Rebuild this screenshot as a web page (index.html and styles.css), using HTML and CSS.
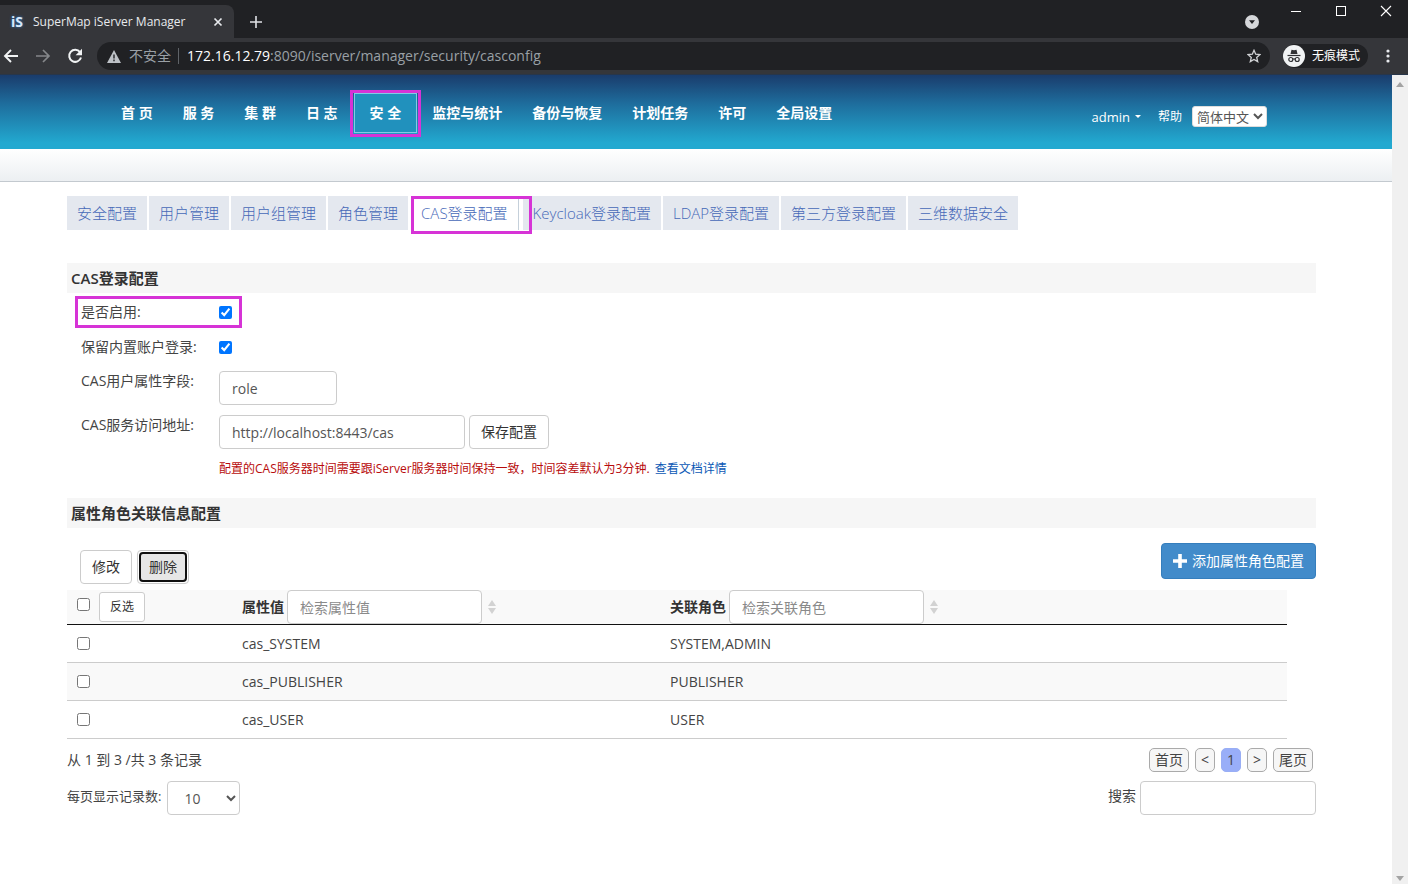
FILE: index.html
```html
<!DOCTYPE html>
<html lang="zh-CN">
<head>
<meta charset="utf-8">
<title>SuperMap iServer Manager</title>
<link rel="stylesheet" href="styles.css">
</head>
<body>
<div class="browser">
  <div class="tabstrip">
    <div class="browser-tab">
      <span class="favicon">iS</span>
      <span class="tab-title">SuperMap iServer Manager</span>
      <button class="icon-btn" aria-label="关闭标签页"><svg width="10" height="10" viewBox="0 0 10 10"><path d="M1.5 1.5l7 7M8.5 1.5l-7 7" stroke="#e8eaed" stroke-width="1.7" fill="none"/></svg></button>
    </div>
    <button class="icon-btn new-tab" aria-label="新标签页"><svg width="12" height="12" viewBox="0 0 12 12"><path d="M6 0v12M0 6h12" stroke="#dfe1e5" stroke-width="1.6"/></svg></button>
    <div class="window-controls">
      <button class="icon-btn tab-search" aria-label="搜索标签页"><svg width="14" height="14" viewBox="0 0 14 14"><circle cx="7" cy="7" r="7" fill="#d5d7da"/><path d="M4 5.3h6L7 9z" fill="#202124"/></svg></button>
      <button class="icon-btn" aria-label="最小化"><svg width="12" height="12" viewBox="0 0 12 12"><path d="M1 6.5h10" stroke="#fff"/></svg></button>
      <button class="icon-btn" aria-label="最大化"><svg width="12" height="12" viewBox="0 0 12 12"><rect x="1.5" y="1.5" width="9" height="9" fill="none" stroke="#fff"/></svg></button>
      <button class="icon-btn" aria-label="关闭"><svg width="12" height="12" viewBox="0 0 12 12"><path d="M1 1l10 10M11 1L1 11" stroke="#fff" stroke-width="1.1"/></svg></button>
    </div>
  </div>
  <div class="toolbar">
    <button class="icon-btn" aria-label="后退"><svg width="16" height="16" viewBox="0 0 16 16"><path d="M15 8H2M8 2L2 8l6 6" stroke="#f1f3f4" stroke-width="1.9" fill="none"/></svg></button>
    <button class="icon-btn" aria-label="前进"><svg width="16" height="16" viewBox="0 0 16 16"><path d="M1 8h13M8 2l6 6-6 6" stroke="#85878a" stroke-width="1.7" fill="none"/></svg></button>
    <button class="icon-btn" aria-label="重新加载"><svg width="16" height="16" viewBox="0 0 16 16"><path d="M13 4.2A6 6 0 1 0 14 9.5" stroke="#f1f3f4" stroke-width="2" fill="none"/><path d="M15 .8v6.4H8.6z" fill="#f1f3f4"/></svg></button>
    <div class="address">
      <svg width="14" height="13" viewBox="0 0 14 13"><path d="M7 0l7 13H0z" fill="#bdc1c6"/><path d="M7 4.5v4M7 9.6v1.6" stroke="#202124" stroke-width="1.4"/></svg>
      <span class="insecure">不安全</span>
      <span class="url"><b>172.16.12.79</b>:8090/iserver/manager/security/casconfig</span>
      <button class="icon-btn" aria-label="收藏"><svg width="14" height="14" viewBox="0 0 14 14"><path d="M7 1.3l1.7 3.9 4.2.4-3.2 2.8 1 4.2L7 10.4l-3.7 2.2 1-4.2L1.1 5.6l4.2-.4z" stroke="#d0d2d5" stroke-width="1.3" fill="none"/></svg></button>
    </div>
    <div class="incognito">
      <svg width="22" height="22" viewBox="0 0 22 22"><circle cx="11" cy="11" r="11" fill="#f1f3f4"/><path d="M7.5 9l1-4.2 2.500.5 2.500-.5 1 4.200z" fill="#303134"/><path d="M4.500 10.500h13" stroke="#303134" stroke-width="1.200"/><g fill="none" stroke="#303134" stroke-width="1.200"><circle cx="7.800" cy="14.500" r="2"/><circle cx="14.200" cy="14.500" r="2"/><path d="M9.800 14.200q1.200-.7 2.400 0"/></g></svg>
      <span>无痕模式</span>
    </div>
    <button class="icon-btn menu" aria-label="菜单"><svg width="4" height="14" viewBox="0 0 4 14" fill="#e8eaed"><circle cx="2" cy="2" r="1.600"/><circle cx="2" cy="7" r="1.600"/><circle cx="2" cy="12" r="1.600"/></svg></button>
  </div>
</div>

<div class="viewport">
  <div class="page">
    <header class="site-header">
      <nav class="main-nav">
        <a href="#">首 页</a>
        <a href="#">服 务</a>
        <a href="#">集 群</a>
        <a href="#">日 志</a>
        <a href="#" class="current">安 全</a>
        <a href="#">监控与统计</a>
        <a href="#">备份与恢复</a>
        <a href="#">计划任务</a>
        <a href="#">许可</a>
        <a href="#">全局设置</a>
      </nav>
      <div class="account">
        <a href="#" class="user">admin <span class="caret"></span></a>
        <a href="#" class="help">帮助</a>
        <select class="lang" aria-label="语言"><option>简体中文</option></select>
      </div>
    </header>
    <div class="subbar"></div>
    <main class="content">
      <nav class="sub-tabs">
        <a href="#">安全配置</a>
        <a href="#">用户管理</a>
        <a href="#">用户组管理</a>
        <a href="#">角色管理</a>
        <a href="#" class="current">CAS登录配置</a>
        <a href="#">Keycloak登录配置</a>
        <a href="#">LDAP登录配置</a>
        <a href="#">第三方登录配置</a>
        <a href="#">三维数据安全</a>
      </nav>

      <h2 class="section-title">CAS登录配置</h2>
      <form class="cas-form">
        <div class="form-row check-row marked">
          <label for="enable">是否启用:</label>
          <input type="checkbox" id="enable" checked>
        </div>
        <div class="form-row check-row">
          <label for="keep">保留内置账户登录:</label>
          <input type="checkbox" id="keep" checked>
        </div>
        <div class="form-row text-row">
          <label for="field">CAS用户属性字段:</label>
          <input type="text" class="field field-small" id="field" value="role">
        </div>
        <div class="form-row">
          <label for="address">CAS服务访问地址:</label>
          <input type="text" class="field field-large" id="address" value="http://localhost:8443/cas">
          <button type="button" class="btn">保存配置</button>
        </div>
        <p class="hint">配置的CAS服务器时间需要跟iServer服务器时间保持一致，时间容差默认为3分钟. <a href="#">查看文档详情</a></p>
      </form>

      <h2 class="section-title">属性角色关联信息配置</h2>
      <div class="table-actions">
        <button type="button" class="btn">修改</button>
        <button type="button" class="btn focused"><span>删除</span></button>
        <button type="button" class="btn primary"><svg width="14" height="14" viewBox="0 0 14 14"><path d="M7 0v14M0 7h14" stroke="#fff" stroke-width="3.600"/></svg>添加属性角色配置</button>
      </div>
      <table class="roles">
        <colgroup><col class="col-check"><col class="col-attr"><col></colgroup>
        <thead>
          <tr>
            <th><div class="head-cell"><input type="checkbox" class="check-all" aria-label="全选"><button type="button" class="btn small">反选</button></div></th>
            <th><div class="head-cell"><label for="find-attr">属性值</label><input type="text" class="field" id="find-attr" placeholder="检索属性值"><svg class="sort" width="8" height="14" viewBox="0 0 8 14"><path d="M4 0l4 6H0zM4 14l4-6H0z" fill="#d2d2d2"/></svg></div></th>
            <th><div class="head-cell"><label for="find-role">关联角色</label><input type="text" class="field" id="find-role" placeholder="检索关联角色"><svg class="sort" width="8" height="14" viewBox="0 0 8 14"><path d="M4 0l4 6H0zM4 14l4-6H0z" fill="#d2d2d2"/></svg></div></th>
          </tr>
        </thead>
        <tbody>
          <tr><td><input type="checkbox" aria-label="cas_SYSTEM"></td><td>cas_SYSTEM</td><td>SYSTEM,ADMIN</td></tr>
          <tr><td><input type="checkbox" aria-label="cas_PUBLISHER"></td><td>cas_PUBLISHER</td><td>PUBLISHER</td></tr>
          <tr><td><input type="checkbox" aria-label="cas_USER"></td><td>cas_USER</td><td>USER</td></tr>
        </tbody>
      </table>
      <div class="table-footer">
        <span>从 1 到 3 /共 3 条记录</span>
        <div class="pager">
          <button type="button">首页</button>
          <button type="button">&lt;</button>
          <button type="button" class="on">1</button>
          <button type="button">&gt;</button>
          <button type="button">尾页</button>
        </div>
      </div>
      <div class="table-footer lower">
        <div class="pair size-pair"><label for="size">每页显示记录数:</label><select class="field page-size" id="size"><option>10</option></select></div>
        <div class="pair"><label for="search">搜索</label><input type="text" class="field search" id="search"></div>
      </div>
    </main>
  </div>
  <div class="scrollbar">
    <svg width="8" height="5" viewBox="0 0 8 5"><path d="M4 0l4 5H0z" fill="#a3a3a3"/></svg>
    <svg width="8" height="5" viewBox="0 0 8 5"><path d="M4 5l4-5H0z" fill="#a3a3a3"/></svg>
  </div>
</div>
</body>
</html>
```
FILE: styles.css
```css
* { box-sizing: border-box; }
body {
  margin: 0;
  min-height: 100vh;
  display: flex;
  flex-direction: column;
  background: #fff;
  color: #444;
  font: 14px/20px "Open Sans", "Noto Sans CJK SC", sans-serif;
}
button, input, select { font: inherit; color: inherit; }
a { text-decoration: none; }
svg { display: block; flex: none; }

/* browser frame */
.browser { background: #35363a; color: #e8eaed; border-bottom: 1px solid #28364a; }
.tabstrip { display: flex; height: 38px; background: #202124; }
.browser-tab {
  display: flex; align-items: center; gap: 10px;
  width: 234px; margin-top: 5px; padding: 0 11px;
  background: #35363a; border-radius: 0 8px 0 0;
}
.favicon { color: #d7e8fb; font-size: 14px; font-weight: 700; text-shadow: 0 0 3px #2f7bd0; }
.tab-title { flex: 1; font-size: 12px; white-space: nowrap; }
.icon-btn { display: flex; align-items: center; justify-content: center; padding: 0; border: 0; background: none; }
.new-tab { margin: 5px 0 0 16px; }
.window-controls { display: flex; align-items: flex-start; gap: 33px; margin-left: auto; padding: 5px 16px 0 0; }
.tab-search { margin-top: 10px; margin-right: -2px; }
.toolbar { display: flex; align-items: center; gap: 16px; height: 36px; padding: 0 18px 0 3px; }
.address {
  flex: 1; display: flex; align-items: center; gap: 8px;
  height: 28px; margin-left: -2px; padding: 0 9px 0 10px; border-radius: 14px; background: #202124;
}
.insecure { color: #9aa0a6; padding-right: 7px; border-right: 1px solid #5f6368; line-height: 16px; }
.url { flex: 1; color: #9aa0a6; }
.url b { color: #fff; font-weight: 400; }
.incognito {
  display: flex; align-items: center; gap: 7px; height: 24px; margin-left: -3px; padding-right: 8px;
  border-radius: 12px; background: #202124; color: #fff; font-size: 12px;
}
.menu { margin-left: 2px; }

/* page area */
.viewport { flex: 1; display: flex; }
.page { flex: 1; min-width: 0; }
.scrollbar {
  display: flex; flex-direction: column; justify-content: space-between; align-items: center;
  width: 16px; padding: 7px 0 3px; background: #f0f0f0;
}
.site-header {
  display: flex; align-items: center; justify-content: space-between;
  height: 74px; padding: 0 125px 0 106px;
  background: linear-gradient(#1a3c6c, #1e6c9c 38%, #22a9d0 92%);
}
.main-nav { display: flex; align-items: center; padding-top: 2px; }
.main-nav a {
  padding: 0 15px; line-height: 38px;
  color: #fff; font-weight: 700; white-space: nowrap;
}
.main-nav .current { position: relative; margin-left: 1px; border: 1px solid #84c9e4; background: #2191bd; }
.main-nav .current::after, .sub-tabs .current::after, .marked::after {
  content: ""; position: absolute; border: 3px solid #d633d6; pointer-events: none;
}
.main-nav .current::after { inset: -4px -5px -5px; }
.account { display: flex; align-items: center; padding-top: 9px; }
.account a { color: #fff; font-size: 13px; }
.user { display: flex; align-items: center; gap: 5px; margin-right: 17px; }
.account .help { margin-right: 10px; font-size: 12px; }
.caret { border: 3px solid transparent; border-top-color: #fff; border-bottom: 0; }
.lang { height: 21px; padding: 0; border: 1px solid #ddd; border-radius: 3px; background: #fff; color: #555; font-size: 13px; }
.subbar { height: 33px; border-bottom: 1px solid #c3c9cf; background: linear-gradient(#fff, #eceff2); }
.content { padding: 14px 76px 20px 67px; }

.sub-tabs { display: flex; gap: 2px; margin-bottom: 33px; }
.sub-tabs a {
  padding: 0 10px; background: #e4e8ef; color: #4668b8;
  font-size: 15px; line-height: 34px; font-weight: 300; white-space: nowrap;
}
.sub-tabs .current { position: relative; margin: 0 2px 0 1px; background: #fff; border-right: 1px solid #c5d0da; }
.sub-tabs .current::after { inset: 0 -14px -4px 0; }

.section-title {
  margin: 0; padding: 0 4px; background: #f6f6f6; color: #333;
  font-size: 15px; line-height: 30px; font-weight: 600;
}
.cas-form { padding: 3px 0 19px 8px; }
.form-row { display: flex; margin-bottom: 10px; padding-left: 6px; }
.form-row label { width: 138px; }
.form-row.check-row { align-items: center; margin-bottom: 3px; height: 32px; }
.form-row.text-row { margin-top: 8px; }
.marked { position: relative; width: 167px; }
.marked::after { inset: 0; }
input[type="checkbox"] { width: 13px; height: 13px; margin: 0; }
.field {
  height: 34px; padding: 0 12px; border: 1px solid #ccc; border-radius: 4px;
  background: #fff; color: #555;
}
.field::placeholder { color: #8a8a8a; }
.field-small { width: 118px; }
.field-large { width: 246px; margin-right: 4px; }
.btn {
  height: 34px; padding: 0 11px; border: 1px solid #ccc; border-radius: 4px;
  background: #fff; color: #333; white-space: nowrap;
}
.hint { margin: 0 0 0 144px; color: #b80c0c; font-size: 12px; }
.hint a { color: #0a58b5; margin-left: 2px; }

.table-actions { display: flex; align-items: center; gap: 5px; margin: 15px 0 5px 13px; }
.table-actions .btn { margin-top: 6px; }
.table-actions .focused { padding: 1px; }
.focused span { display: block; padding: 3px 8px; border: 2px solid #111; border-radius: 4px; background: #e6e6e6; }
.table-actions .primary {
  display: flex; align-items: center; gap: 5px;
  height: 36px; margin: 0 0 6px auto; border-color: #357ebd; background: #428bca; color: #fff;
}
.roles { width: calc(100% - 29px); border-collapse: collapse; table-layout: fixed; }
.col-check { width: 167px; }
.col-attr { width: 428px; }
.roles th { padding: 0 8px; background: #f9f9f9; border-bottom: 1px solid #111; color: #333; text-align: left; font-weight: 600; }
.roles td { height: 38px; padding: 0 8px; border-bottom: 1px solid #ccc; }
.roles td:first-child { padding-left: 10px; }
.roles td input { display: block; }
.roles tbody tr:nth-child(even) { background: #f9f9f9; }
.head-cell { display: flex; align-items: center; gap: 3px; }
.head-cell .field { width: 195px; font-weight: 400; }
.head-cell .check-all { margin: 0 6px 6px 2px; }
.btn.small { height: 30px; padding: 0 10px; border-radius: 3px; font-size: 12px; font-weight: 400; }
.sort { margin-left: 3px; }

.table-footer { display: flex; justify-content: space-between; align-items: center; padding-top: 9px; }
.pager { display: flex; gap: 6px; margin-right: 3px; }
.pager button { height: 24px; padding: 0 5px; border: 1px solid #aaa; border-radius: 5px; background: #f6f6f6; line-height: 20px; }
.pager .on { border-color: #99aef5; background: #99aef8; }
.pair { display: flex; gap: 4px; }
.pair label { line-height: 30px; }
.size-pair { gap: 6px; }
.size-pair label { font-size: 13px; }
.page-size { width: 73px; }
.search { width: 176px; }
```
